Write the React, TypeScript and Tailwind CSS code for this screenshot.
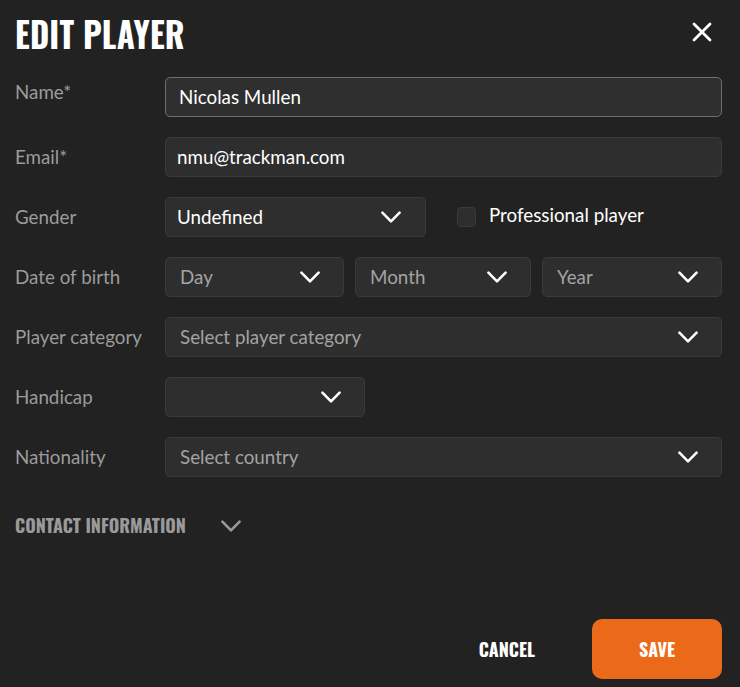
import React from "react";

const display = "font-['Oswald','Liberation_Sans_Narrow','DejaVu_Sans_Condensed',sans-serif]";
const body = "font-['Lato','Noto_Sans',sans-serif]";

const Chevron = ({ className = "" }: { className?: string }) => (
  <svg viewBox="0 0 24 14" className={className} fill="none" stroke="currentColor" strokeWidth={3} strokeLinecap="round" strokeLinejoin="round">
    <path d="M2 2l10 10L22 2" />
  </svg>
);

const Select = ({ value, placeholder, className = "" }: { value?: string; placeholder?: string; className?: string }) => (
  <div className={`flex h-10 items-center justify-between rounded-[5px] border border-[#3a3a3a] bg-[#2e2e2e] pl-[14px] pr-[22px] ${className}`}>
    <span className={value ? "text-white" : "text-[#a3a3a3]"}>{value ?? placeholder}</span>
    <Chevron className="h-[12px] w-[22px] text-white" />
  </div>
);

const Row = ({ label, labelClass = "", children }: { label: string; labelClass?: string; children: React.ReactNode }) => (
  <div className="flex items-center">
    <div className={`w-[150px] shrink-0 text-[#9b9b9b] ${labelClass}`}>{label}</div>
    <div className="flex-1">{children}</div>
  </div>
);

export default function App() {
  return (
    <div className={`${body} h-[687px] w-[740px] bg-[#222222] pl-[15px] pr-[18px] text-[18.8px]`}>
      <div className="flex h-[64px] items-center justify-between">
        <h1 className={`${display} mt-[2px] origin-left scale-x-[0.94] text-[35px] font-bold leading-none tracking-[0.2px] text-white`}>EDIT PLAYER</h1>
        <svg viewBox="0 0 20 20" className="mr-[10px] h-[20px] w-[20px] text-white" stroke="currentColor" strokeWidth={2.8} strokeLinecap="round">
          <path d="M2 2l16 16M18 2L2 18" />
        </svg>
      </div>

      <div className="mt-[13px] flex flex-col gap-5">
        <Row label="Name*" labelClass="-mt-[10px]">
          <div className="flex h-10 items-center rounded-[5px] border border-[#6e6e6e] bg-[#2f2f2f] px-[13px] text-white">Nicolas Mullen</div>
        </Row>
        <Row label="Email*">
          <div className="flex h-10 items-center rounded-[5px] border border-[#3a3a3a] bg-[#2e2e2e] px-[11px] text-white">nmu@trackman.com</div>
        </Row>
        <Row label="Gender">
          <div className="flex items-center">
            <Select value="Undefined" className="w-[261px] !pl-[11px] !pr-[23px]" />
            <div className="ml-[31px] h-[20px] w-[19px] rounded-[4px] border border-[#3a3a3a] bg-[#2e2e2e]" />
            <span className="ml-[13px] -mt-[4px] text-white">Professional player</span>
          </div>
        </Row>
        <Row label="Date of birth">
          <div className="grid grid-cols-[179px_176px_1fr] gap-[11px]">
            <Select placeholder="Day" />
            <Select placeholder="Month" />
            <Select placeholder="Year" />
          </div>
        </Row>
        <Row label="Player category">
          <Select placeholder="Select player category" />
        </Row>
        <Row label="Handicap">
          <Select className="w-[200px]" />
        </Row>
        <Row label="Nationality">
          <Select placeholder="Select country" />
        </Row>
      </div>

      <div className="mt-[35px] flex items-center">
        <span className={`${display} text-[18px] font-bold text-[#9a9a9a]`}>CONTACT INFORMATION</span>
        <Chevron className="ml-[34px] h-[12px] w-[22px] text-[#9a9a9a]" />
      </div>

      <div className="mt-[80px] flex items-center justify-end">
        <button className={`${display} mr-[57px] text-[18px] font-bold text-white`}>CANCEL</button>
        <button className={`${display} h-[60px] w-[130px] rounded-[10px] bg-[#eb6a1a] text-[18px] font-bold text-white`}>SAVE</button>
      </div>
    </div>
  );
}
